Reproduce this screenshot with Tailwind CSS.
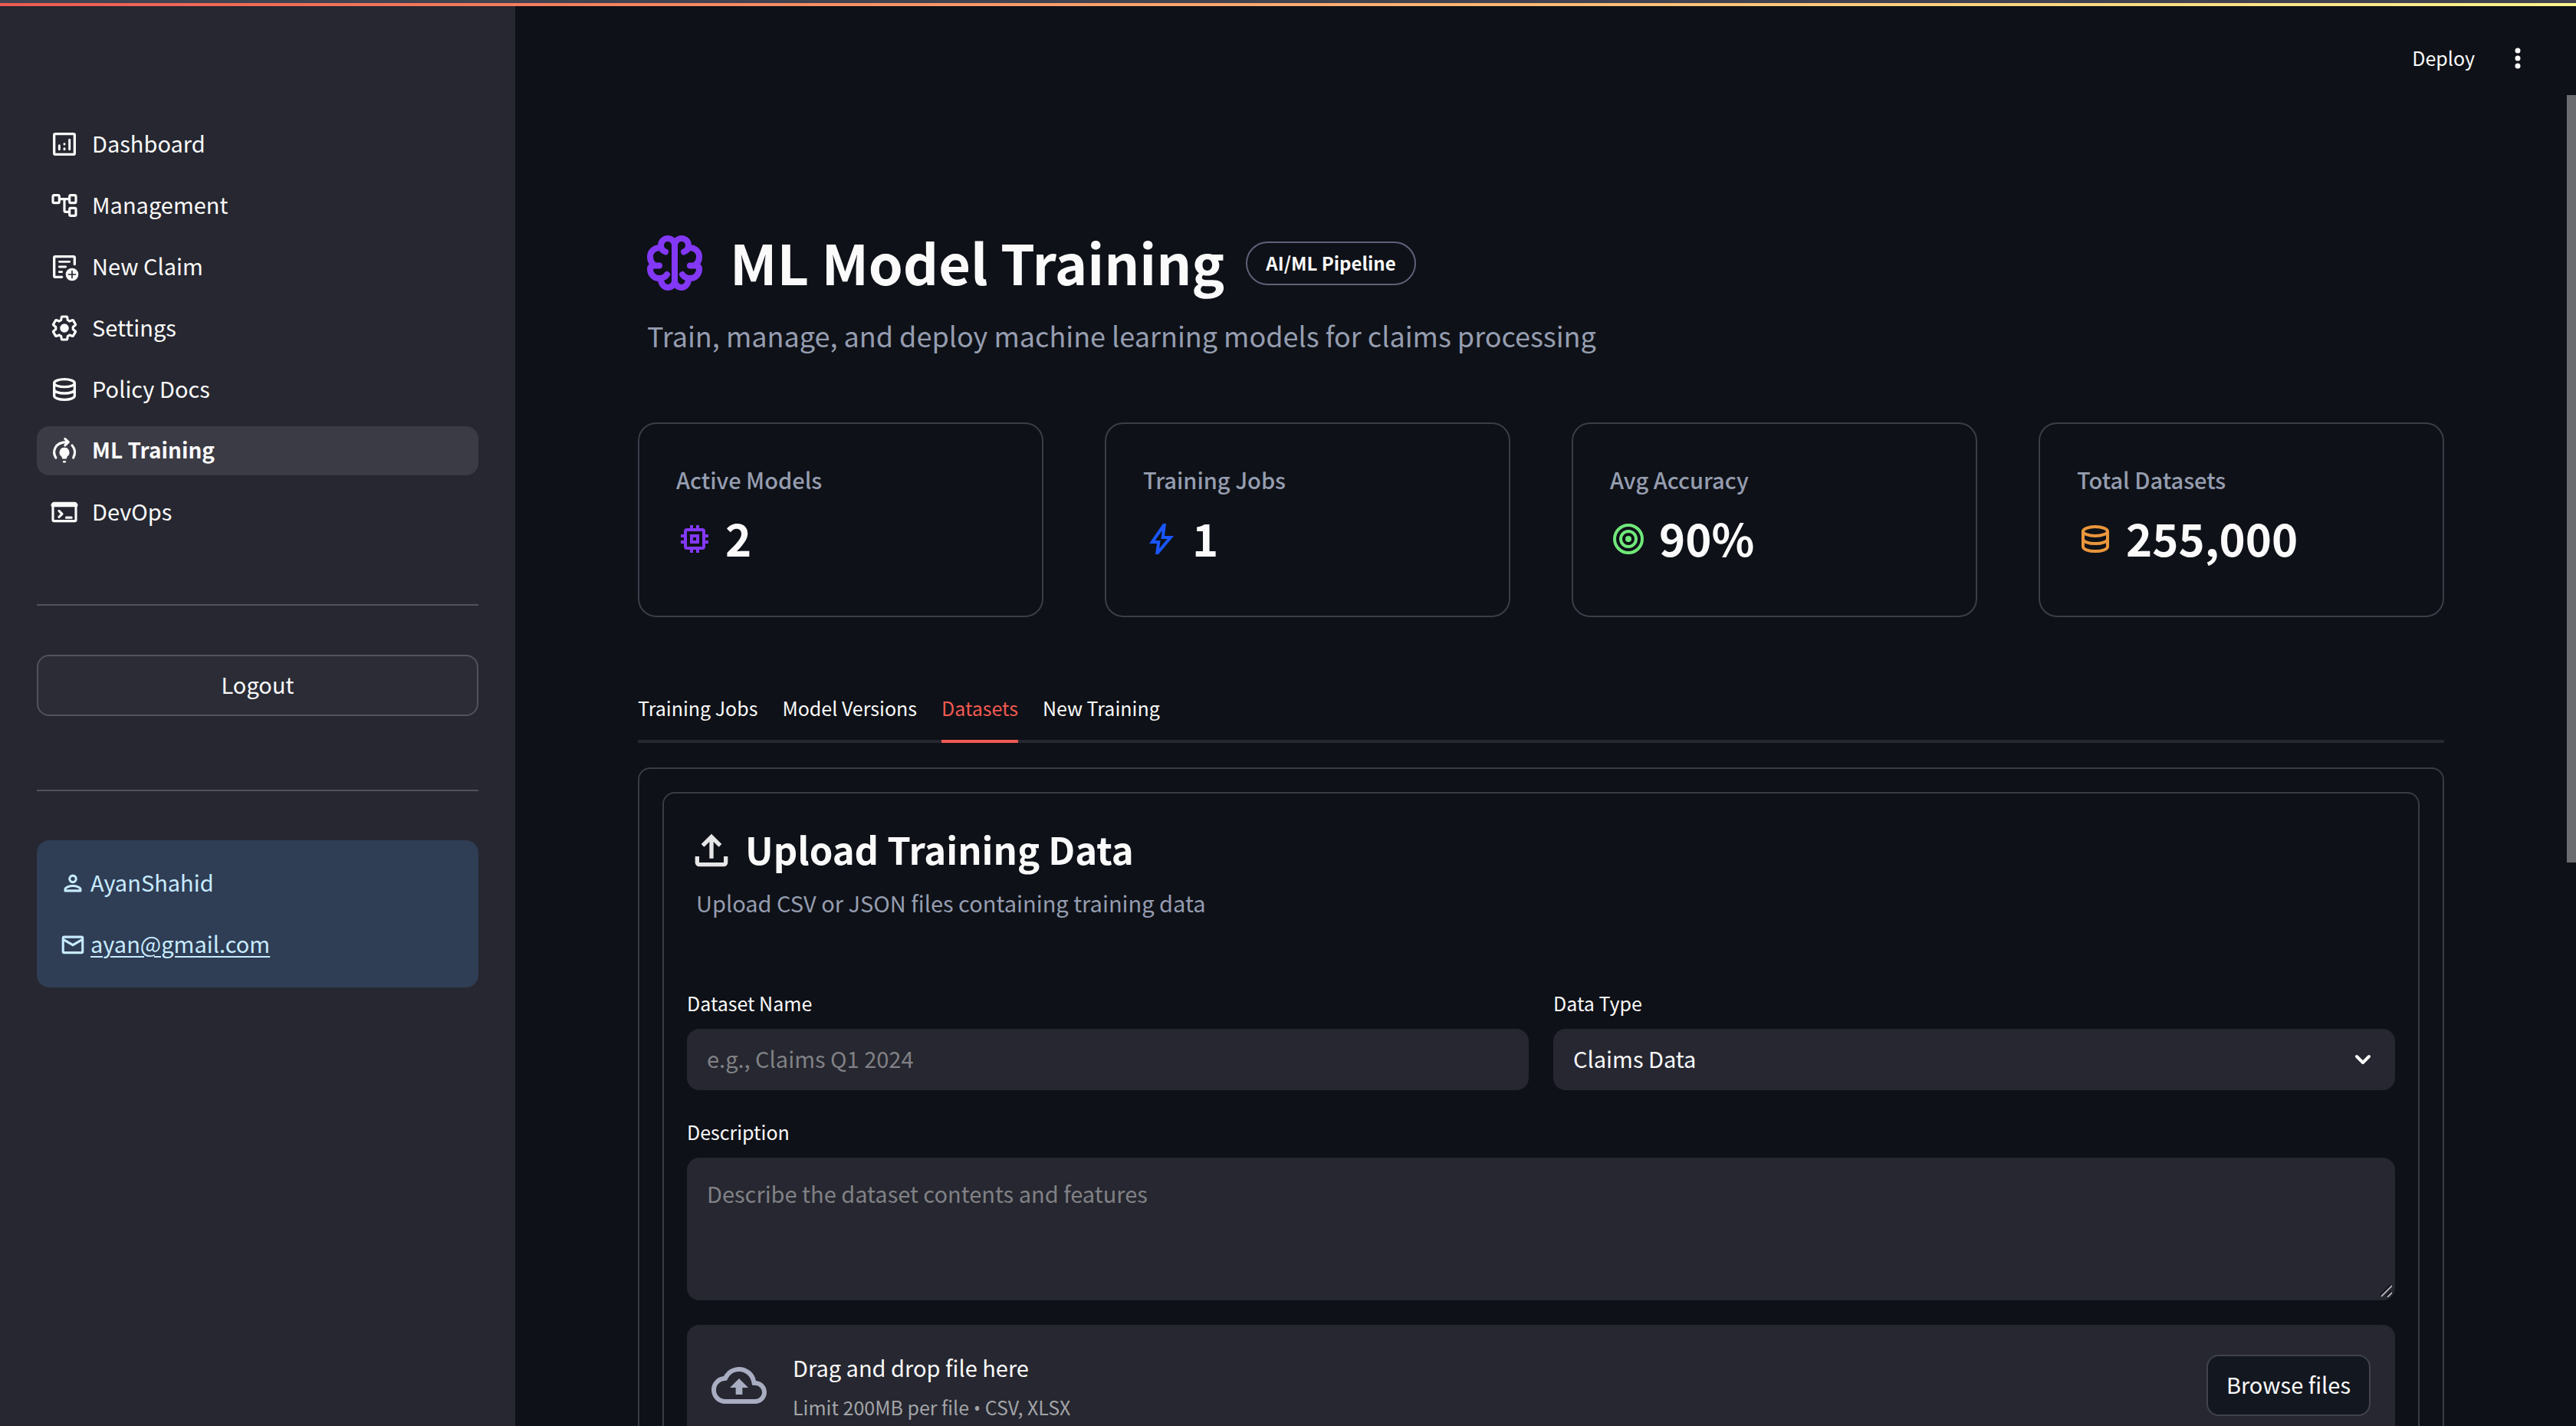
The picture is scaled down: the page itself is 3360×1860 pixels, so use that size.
<!DOCTYPE html>
<html lang="en">
<head>
<meta charset="utf-8">
<title>ML Model Training</title>
<script src="https://cdn.jsdelivr.net/npm/@tailwindcss/browser@4"></script>
</head>
<body class="flex h-screen flex-col overflow-hidden bg-[#0e1117] font-['Noto_Sans_CJK_SC',sans-serif] text-[29px] leading-[48px] text-[#fafafa] [color-scheme:dark]">

<div class="h-1 shrink-0 bg-[#41424f]"></div>
<div class="h-1 shrink-0 bg-linear-to-r from-[#ee5a52] to-[#fdf68e]"></div>

<div class="flex min-h-0 flex-1">

  <aside class="flex w-[672px] shrink-0 flex-col bg-[#262730] px-12 pt-[148px]">
    <nav class="flex flex-col gap-4">
      <a href="#" class="flex h-16 items-center gap-4 rounded-2xl px-4">
        <svg class="size-10" viewBox="0 0 24 24" fill="none" stroke="currentColor" stroke-width="2" stroke-linecap="round"><rect x="4" y="4" width="16" height="16" rx="1"/><path d="M8 13v3M12 15.5v.5M12 11.8v.2M16 8.5V16" stroke-width="1.8"/></svg>
        <span class="pb-1">Dashboard</span>
      </a>
      <a href="#" class="flex h-16 items-center gap-4 rounded-2xl px-4">
        <svg class="size-10" viewBox="0 0 24 24" fill="none" stroke="currentColor" stroke-width="1.9"><rect x="3" y="4" width="5" height="6" rx="1"/><rect x="16" y="4" width="5" height="6" rx="1"/><rect x="16" y="14" width="5" height="6" rx="1"/><path d="M8 7h8M12 7v9q0 1 1 1h3"/></svg>
        <span class="pb-1">Management</span>
      </a>
      <a href="#" class="flex h-16 items-center gap-4 rounded-2xl px-4">
        <svg class="size-10" viewBox="0 0 24 24" fill="none" stroke="currentColor" stroke-width="2" stroke-linecap="round"><path d="M20 10V5q0-1-1-1H5Q4 4 4 5v14q0 1 1 1h5"/><path d="M8 8h8M8 12h5M8 16h2" stroke-width="1.7"/><circle cx="18" cy="18" r="5" fill="currentColor" stroke="none"/><path d="M18 15.3v5.4M15.3 18h5.4" stroke="#262730" stroke-width="1"/></svg>
        <span class="pb-1">New Claim</span>
      </a>
      <a href="#" class="flex h-16 items-center gap-4 rounded-2xl px-4">
        <svg class="size-10" viewBox="0 0 24 24" fill="none" stroke="currentColor" stroke-width="2.1" stroke-linejoin="round"><path transform="translate(1.2 1.2) scale(.9)" d="M19.43 12.98c.04-.32.07-.64.07-.98s-.03-.66-.07-.98l2.11-1.65c.19-.15.24-.42.12-.64l-2-3.46c-.09-.16-.26-.25-.44-.25-.06 0-.12.01-.17.03l-2.49 1c-.52-.4-1.08-.73-1.69-.98l-.38-2.65C14.46 2.18 14.25 2 14 2h-4c-.25 0-.46.18-.49.42l-.38 2.65c-.61.25-1.17.59-1.69.98l-2.49-1c-.06-.02-.12-.03-.18-.03-.17 0-.34.09-.43.25l-2 3.46c-.13.22-.07.49.12.64l2.11 1.65c-.04.32-.07.65-.07.98s.03.66.07.98l-2.11 1.65c-.19.15-.24.42-.12.64l2 3.46c.09.16.26.25.44.25.06 0 .12-.01.17-.03l2.49-1c.52.4 1.08.73 1.69.98l.38 2.65c.03.24.24.42.49.42h4c.25 0 .46-.18.49-.42l.38-2.65c.61-.25 1.17-.59 1.69-.98l2.49 1c.06.02.12.03.18.03.17 0 .34-.09.43-.25l2-3.46c.12-.22.07-.49-.12-.64l-2.11-1.65z"/><circle cx="12" cy="12" r="3.5" fill="currentColor" stroke="none"/></svg>
        <span class="pb-1">Settings</span>
      </a>
      <a href="#" class="flex h-16 items-center gap-4 rounded-2xl px-4">
        <svg class="size-10" viewBox="0 0 24 24" fill="none" stroke="currentColor" stroke-width="2"><ellipse cx="12" cy="7" rx="8" ry="3"/><path d="M4 7v10c0 1.7 3.6 3 8 3s8-1.3 8-3V7M4 12c0 1.7 3.6 3 8 3s8-1.3 8-3"/></svg>
        <span class="pb-1">Policy Docs</span>
      </a>
      <a href="#" aria-current="page" class="flex h-16 items-center gap-4 rounded-2xl bg-[#3b3b45] px-4 text-[28px] font-bold">
        <svg class="size-10" viewBox="0 0 24 24" fill="none" stroke="currentColor" stroke-width="1.9" stroke-linecap="round" stroke-linejoin="round"><path d="M5.3 17.5C2.5 13 4 5.2 14 5.2M12.5 2.7 15.2 5.2l-2.7 2.5M18 7.800c2.300 2.500 2.800 6 1 9.700"/><path d="M12 9.500a3.800 3.800 0 0 0-2.300 6.900l.7 1.900h3.200l.7-1.900A3.800 3.800 0 0 0 12 9.500z" fill="currentColor" stroke="none"/><path d="M11.500 20.500h1" stroke-width="1.500"/></svg>
        <span class="pb-1">ML Training</span>
      </a>
      <a href="#" class="flex h-16 items-center gap-4 rounded-2xl px-4">
        <svg class="size-10" viewBox="0 0 24 24" fill="none" stroke="currentColor" stroke-width="1.9" stroke-linecap="round" stroke-linejoin="round"><rect x="3" y="5" width="18" height="14" rx="1"/><path d="M3 6.500h18" stroke-width="3"/><path d="m7.800 11 2.400 2.400-2.400 2.400M13.500 16.300h4"/></svg>
        <span class="pb-1">DevOps</span>
      </a>
    </nav>
    <hr class="mt-22 border-t-2 border-[#51525b]">
    <button type="button" class="mt-16 h-20 shrink-0 rounded-2xl border-2 border-[#51525b] bg-[#2b2c36] pb-1">Logout</button>
    <hr class="mt-24 border-t-2 border-[#51525b]">
    <section class="mt-16 flex h-48 shrink-0 flex-col justify-center gap-7 rounded-2xl bg-[#2f3d55] px-[30px] text-[#c7ebff]">
      <p class="flex items-center gap-1.5">
        <svg class="size-[34px]" viewBox="0 0 24 24" fill="none" stroke="currentColor" stroke-width="2.2"><circle cx="12" cy="8" r="3"/><path d="M5 17.500c0-1.600 3.500-3 7-3s7 1.400 7 3V19H5z" stroke-linejoin="round"/></svg>
        <span class="pb-1">AyanShahid</span>
      </p>
      <p class="flex items-center gap-1.5">
        <svg class="size-[34px]" viewBox="0 0 24 24" fill="none" stroke="currentColor" stroke-width="2.2"><rect x="3" y="5" width="18" height="14.500" rx="1"/><path d="m3.500 7.500 8.500 5 8.500-5"/></svg>
        <a href="mailto:ayan@gmail.com" class="pb-1 underline decoration-2 underline-offset-4">ayan@gmail.com</a>
      </p>
    </section>
  </aside>

  <main class="flex min-w-0 flex-1 flex-col">
    <header class="flex h-[136px] shrink-0 items-center justify-end gap-9 pr-11">
      <button type="button" class="pb-0.5 text-[25px]">Deploy</button>
      <button type="button" aria-label="Menu"><svg class="size-10" viewBox="0 0 40 40" fill="currentColor"><circle cx="20" cy="10" r="3.500"/><circle cx="20" cy="20" r="3.500"/><circle cx="20" cy="30" r="3.500"/></svg></button>
    </header>

    <div class="px-40 pt-[151px]">
      <div class="flex h-24 items-center pl-3">
        <svg class="size-18 text-[#8338f5]" viewBox="0 0 72 72" fill="none" stroke="currentColor" stroke-width="8" stroke-linecap="round" stroke-linejoin="round">
          <path d="M36 8v56"/>
          <path d="M36 13a9 9 0 0 0-18 0c0 4 2 7 6 8.500M18 16C9 16 4 21 4 28c0 5 1 7 4 9.500M16 39.500H9C4 40 4 42 4 44c0 7 5 12 12 12 5 0 8-2 10-5M18 57c0 6 4 11 9 11s9-4 9-9"/>
          <path d="M36 13a9 9 0 0 1 18 0c0 4-2 7-6 8.500M54 16c9 0 14 5 14 12 0 5-1 7-4 9.500M56 39.500h7c5 .5 5 2.500 5 4.500 0 7-5 12-12 12-5 0-8-2-10-5M54 57c0 6-4 11-9 11s-9-4-9-9"/>
        </svg>
        <h1 class="pb-1 pl-9 text-[72px] leading-[96px] font-bold">ML Model Training</h1>
        <span class="ml-7 rounded-full border-2 border-[#5f6078] px-6 pb-0.5 text-[24px] leading-[51px] font-bold">AI/ML Pipeline</span>
      </div>
      <p class="mt-4 pl-3 text-[36px] leading-[60px] text-[#959db0]">Train, manage, and deploy machine learning models for claims processing</p>

      <section class="mt-21 grid grid-cols-4 gap-20">
        <article class="h-[254px] rounded-3xl border-2 border-[#3c3d49] px-12 pt-12">
          <h2 class="font-medium text-[#959db0]">Active Models</h2>
          <p class="mt-5 flex items-center gap-4 text-[58px] leading-[64px] font-bold">
            <svg class="size-12 text-[#8338f5]" viewBox="0 0 24 24" fill="none" stroke="currentColor" stroke-width="2"><rect x="6" y="6" width="12" height="12" rx="1"/><rect x="10" y="10" width="4" height="4"/><path d="M10 3v3M14 3v3M10 18v3M14 18v3M3 10h3M3 14h3M18 10h3M18 14h3"/></svg>
            <span class="pb-1">2</span>
          </p>
        </article>
        <article class="h-[254px] rounded-3xl border-2 border-[#3c3d49] px-12 pt-12">
          <h2 class="font-medium text-[#959db0]">Training Jobs</h2>
          <p class="mt-5 flex items-center gap-4 text-[58px] leading-[64px] font-bold">
            <svg class="size-12 text-[#1a56ff]" viewBox="0 0 24 24" fill="currentColor"><path d="m10.550 18.200 5.175-6.200h-4l.725-5.675L7.825 13H11.300zM8 22l1-7H4l9-13h2l-1 8h6L10 22z"/></svg>
            <span class="pb-1">1</span>
          </p>
        </article>
        <article class="h-[254px] rounded-3xl border-2 border-[#3c3d49] px-12 pt-12">
          <h2 class="font-medium text-[#959db0]">Avg Accuracy</h2>
          <p class="mt-5 flex items-center gap-4 text-[58px] leading-[64px] font-bold">
            <svg class="size-12 text-[#70e87b]" viewBox="0 0 24 24" fill="none" stroke="currentColor" stroke-width="2"><circle cx="12" cy="12" r="9"/><circle cx="12" cy="12" r="5"/><circle cx="12" cy="12" r="2" fill="currentColor" stroke="none"/></svg>
            <span class="pb-1">90%</span>
          </p>
        </article>
        <article class="h-[254px] rounded-3xl border-2 border-[#3c3d49] px-12 pt-12">
          <h2 class="font-medium text-[#959db0]">Total Datasets</h2>
          <p class="mt-5 flex items-center gap-4 text-[58px] leading-[64px] font-bold">
            <svg class="size-12 text-[#ea963c]" viewBox="0 0 24 24" fill="none" stroke="currentColor" stroke-width="2"><ellipse cx="12" cy="7" rx="8" ry="3"/><path d="M4 7v10c0 1.700 3.600 3 8 3s8-1.300 8-3V7M4 12c0 1.700 3.600 3 8 3s8-1.300 8-3"/></svg>
            <span class="pb-1">255,000</span>
          </p>
        </article>
      </section>

      <div role="tablist" class="mt-20 flex h-[84px] gap-8 border-b-4 border-[#262730] text-[25px]">
        <button type="button" role="tab" class="pb-1">Training Jobs</button>
        <button type="button" role="tab" class="pb-1">Model Versions</button>
        <button type="button" role="tab" aria-selected="true" class="-mb-1 border-b-4 border-[#f05a52] pb-1 text-[#f05a52]">Datasets</button>
        <button type="button" role="tab" class="pb-1">New Training</button>
      </div>

      <section class="mt-8 rounded-2xl border-2 border-[#3a3c43] p-[30px]">
        <form class="rounded-2xl border-2 border-[#3a3c43] p-[30px]">
          <div class="mt-3 flex h-16 items-center gap-3">
            <svg class="size-16 text-[#e6e6e8]" viewBox="0 0 24 24" fill="currentColor"><path d="M11 16V7.850l-2.600 2.600L7 9l5-5 5 5-1.400 1.450-2.600-2.600V16zM6 20q-.825 0-1.413-.587Q4 18.825 4 18v-3h2v3h12v-3h2v3q0 .825-.587 1.413Q18.825 20 18 20z"/></svg>
            <h2 class="pb-1 text-[49px] leading-[64px] font-bold">Upload Training Data</h2>
          </div>
          <p class="mt-3 pl-3 text-[#959db0]">Upload CSV or JSON files containing training data</p>

          <div class="mt-[85px] grid grid-cols-2 gap-8">
            <div class="flex flex-col gap-3">
              <label for="dataset-name" class="text-[25px] leading-[44px]">Dataset Name</label>
              <input id="dataset-name" type="text" placeholder="e.g., Claims Q1 2024" class="h-20 rounded-2xl bg-[#262730] px-[26px] pb-1 placeholder:text-[#808185]">
            </div>
            <div class="flex flex-col gap-3">
              <label for="data-type" class="text-[25px] leading-[44px]">Data Type</label>
              <div class="relative">
                <select id="data-type" class="h-20 w-full appearance-none rounded-2xl bg-[#262730] px-[26px] pb-1">
                  <option>Claims Data</option>
                </select>
                <svg class="pointer-events-none absolute top-5 right-[22px] size-10" viewBox="0 0 40 40" fill="none" stroke="currentColor" stroke-width="4" stroke-linecap="round" stroke-linejoin="round"><path d="m12 16 8 8 8-8"/></svg>
              </div>
            </div>
            <div class="col-span-2 flex flex-col gap-3">
              <label for="description" class="text-[25px] leading-[44px]">Description</label>
              <div class="relative flex">
                <textarea id="description" placeholder="Describe the dataset contents and features" class="h-[186px] flex-1 resize-none rounded-2xl bg-[#262730] px-[26px] pt-[22px] placeholder:text-[#808185]"></textarea>
                <svg class="pointer-events-none absolute right-1 bottom-1 size-4" viewBox="0 0 16 16" fill="none"><path d="M1 14 15 0M9 15l6-6" stroke="#0e1117" stroke-width="3"/><path d="M2 15 16 1M10 16l6-6" stroke="#b4b4b8" stroke-width="1.800"/></svg>
              </div>
            </div>
            <div class="col-span-2 flex h-[158px] items-center gap-[34px] rounded-2xl bg-[#262730] px-8">
              <svg class="size-18 text-[#a9adc1]" viewBox="0 0 24 24" fill="currentColor"><path d="M19.350 10.040A7.490 7.490 0 0 0 12 4C9.110 4 6.600 5.640 5.350 8.040A5.994 5.994 0 0 0 0 14c0 3.310 2.690 6 6 6h13c2.760 0 5-2.240 5-5 0-2.640-2.050-4.780-4.650-4.960zM19 18H6c-2.210 0-4-1.790-4-4 0-2.050 1.530-3.760 3.560-3.970l1.070-.110.500-.950A5.469 5.469 0 0 1 12 6c2.620 0 4.880 1.860 5.390 4.430l.300 1.500 1.530.110A2.980 2.980 0 0 1 22 15c0 1.650-1.350 3-3 3zM8 13h2.550v3h2.900v-3H16l-4-4z"/></svg>
              <div class="flex flex-1 flex-col gap-1 pt-1">
                <span>Drag and drop file here</span>
                <small class="text-[25px] text-[#a3a4a8]">Limit 200MB per file <span class="font-['Open_Sans']">•</span> CSV, XLSX</small>
              </div>
              <button type="button" class="h-20 rounded-2xl border-2 border-[#41434c] bg-[#131720] px-6 pb-1">Browse files</button>
            </div>
          </div>
        </form>
      </section>
    </div>
  </main>

  <div class="w-3 shrink-0 pt-[116px]" aria-hidden="true">
    <div class="h-[1001px] bg-[#6b6c70]"></div>
  </div>
</div>
</body>
</html>
